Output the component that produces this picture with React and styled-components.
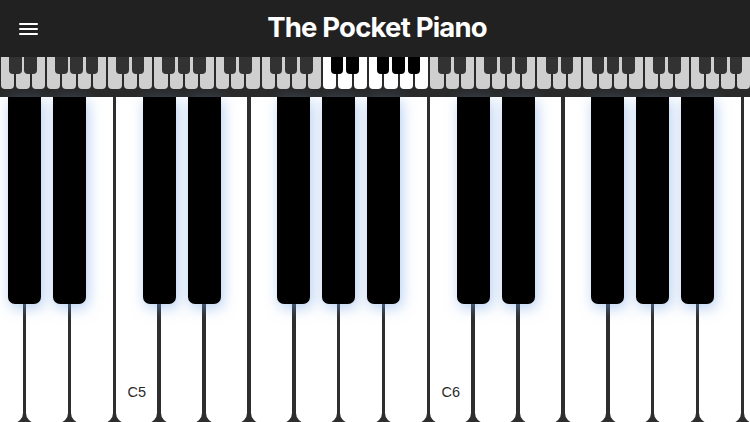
import styled, { createGlobalStyle } from 'styled-components'

const GlobalStyle = createGlobalStyle`
  html, body {
    margin: 0;
    padding: 0;
    background: #2a2a2a;
    overflow: hidden;
  }
  * {
    box-sizing: border-box;
  }
`

const Screen = styled.div`
  width: 750px;
  height: 422px;
  display: flex;
  flex-direction: column;
  overflow: hidden;
  background: #2e2e2e;
  font-family: Inter, 'Liberation Sans', sans-serif;
`

const Header = styled.header`
  height: 57px;
  flex: 0 0 57px;
  background: #212121;
  display: grid;
  grid-template-columns: 58px 1fr 58px;
  align-items: center;
`

const MenuButton = styled.button`
  width: 58px;
  height: 57px;
  border: none;
  background: transparent;
  padding: 0 0 0 19px;
  display: flex;
  flex-direction: column;
  justify-content: center;
  gap: 3px;
  cursor: pointer;
`

const MenuBar = styled.span`
  display: block;
  width: 19px;
  height: 2px;
  border-radius: 1px;
  background: #fff;
`

const Title = styled.h1`
  margin: 0;
  text-align: center;
  color: #fff;
  font-size: 27.5px;
  font-weight: 700;
  letter-spacing: -0.8px;
  line-height: 1;
  padding: 0 0 2px 4px;
`

const MiniBand = styled.div`
  flex: 0 0 40px;
  padding-bottom: 8px;
  background: #2a2a2a;
`

const MiniKeys = styled.div`
  display: flex;
  gap: 2px;
  padding-left: 1px;
  height: 32px;
`

const MiniWhite = styled.div`
  position: relative;
  flex: 1 1 0;
  height: 100%;
  background: ${(p) => (p.$active ? '#ffffff' : '#cfcfcf')};
  border-radius: 0 0 4px 4px;
`

const MiniBlack = styled.div`
  position: absolute;
  top: 0;
  right: -7.25px;
  width: 12.5px;
  height: 17px;
  z-index: 2;
  background: ${(p) => (p.$active ? '#000000' : '#323232')};
  border-radius: 0 0 4px 4px;
`

const Keyboard = styled.div`
  flex: 1;
  display: flex;
  gap: 3.5px;
  margin-left: -18.5px;
`

const WhiteKey = styled.div`
  position: relative;
  flex: 0 0 41.36px;
  height: 326px;
  background: #ffffff;
  border-radius: 0 0 10px 10px;
  display: flex;
  flex-direction: column;
  justify-content: flex-end;
  align-items: center;
  padding-bottom: 22px;
`

const BlackKey = styled.div`
  position: absolute;
  top: 0;
  right: -18.25px;
  width: 33px;
  height: 207px;
  z-index: 2;
  background: #000;
  border-radius: 0 0 7px 7px;
  box-shadow: 2px 4px 14px rgba(110, 160, 230, 0.5);
`

const NoteLabel = styled.span`
  font-family: 'Liberation Sans', Arial, sans-serif;
  font-size: 14.5px;
  color: #2a2a2a;
  line-height: 17px;
`

const OCTAVE = ['C', 'D', 'E', 'F', 'G', 'A', 'B']
const HAS_SHARP = { C: true, D: true, E: false, F: true, G: true, A: true, B: false }

const miniKeys = Array.from({ length: 49 }, (_, i) => {
  const name = OCTAVE[i % 7]
  return { name, octave: Math.floor(i / 7), sharp: HAS_SHARP[name] && i < 48 }
})

// visible part of the big keyboard: G4 .. C7
const mainKeys = []
for (let i = 4; i < 4 + 18; i++) {
  const name = OCTAVE[i % 7]
  const octave = 4 + Math.floor(i / 7)
  mainKeys.push({ name, octave, sharp: HAS_SHARP[name] })
}

export default function App() {
  return (
    <>
      <GlobalStyle />
      <Screen>
        <Header>
          <MenuButton aria-label="Menu">
            <MenuBar />
            <MenuBar />
            <MenuBar />
          </MenuButton>
          <Title>The Pocket Piano</Title>
          <div />
        </Header>

        <MiniBand>
          <MiniKeys>
            {miniKeys.map((k, i) => (
              <MiniWhite key={i} $active={k.octave === 3}>
                {k.sharp && <MiniBlack $active={k.octave === 3} />}
              </MiniWhite>
            ))}
          </MiniKeys>
        </MiniBand>

        <Keyboard>
          {mainKeys.map((k) => (
            <WhiteKey key={k.name + k.octave}>
              {k.sharp && <BlackKey />}
              {k.name === 'C' && k.octave < 7 && <NoteLabel>C{k.octave}</NoteLabel>}
            </WhiteKey>
          ))}
        </Keyboard>
      </Screen>
    </>
  )
}
